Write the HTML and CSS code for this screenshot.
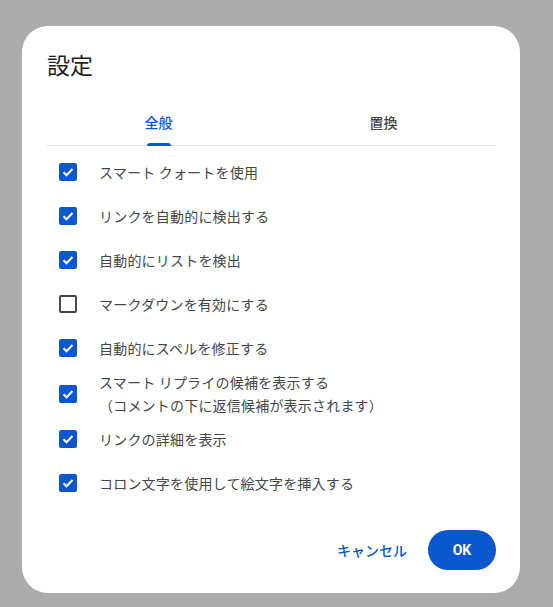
FILE: index.html
```html
<!DOCTYPE html>
<html lang="ja">
<head>
<meta charset="utf-8">
<link rel="stylesheet" href="styles.css">
</head>
<body>
<div class="dialog">
  <h1 class="title">設定</h1>
  <div class="tabs">
    <div class="tab active">全般<span class="indicator"></span></div>
    <div class="tab">置換</div>
  </div>
  <ul class="list">
    <li class="row"><span class="cb on"><svg viewBox="0 0 18 18"><path d="M4.5 9.2l3 3 6-6.2" fill="none" stroke="#fff" stroke-width="2"/></svg></span><span class="label">スマート クォートを使用</span></li>
    <li class="row"><span class="cb on"><svg viewBox="0 0 18 18"><path d="M4.5 9.2l3 3 6-6.2" fill="none" stroke="#fff" stroke-width="2"/></svg></span><span class="label">リンクを自動的に検出する</span></li>
    <li class="row"><span class="cb on"><svg viewBox="0 0 18 18"><path d="M4.5 9.2l3 3 6-6.2" fill="none" stroke="#fff" stroke-width="2"/></svg></span><span class="label">自動的にリストを検出</span></li>
    <li class="row"><span class="cb off"></span><span class="label">マークダウンを有効にする</span></li>
    <li class="row"><span class="cb on"><svg viewBox="0 0 18 18"><path d="M4.5 9.2l3 3 6-6.2" fill="none" stroke="#fff" stroke-width="2"/></svg></span><span class="label">自動的にスペルを修正する</span></li>
    <li class="row tall"><span class="cb on"><svg viewBox="0 0 18 18"><path d="M4.5 9.2l3 3 6-6.2" fill="none" stroke="#fff" stroke-width="2"/></svg></span><span class="label">スマート リプライの候補を表示する<br>（コメントの下に返信候補が表示されます）</span></li>
    <li class="row"><span class="cb on"><svg viewBox="0 0 18 18"><path d="M4.5 9.2l3 3 6-6.2" fill="none" stroke="#fff" stroke-width="2"/></svg></span><span class="label">リンクの詳細を表示</span></li>
    <li class="row"><span class="cb on"><svg viewBox="0 0 18 18"><path d="M4.5 9.2l3 3 6-6.2" fill="none" stroke="#fff" stroke-width="2"/></svg></span><span class="label">コロン文字を使用して絵文字を挿入する</span></li>
  </ul>
  <div class="actions">
    <button class="btn text">キャンセル</button>
    <button class="btn filled">OK</button>
  </div>
</div>
</body>
</html>
```
FILE: styles.css
```css
html, body {
  margin: 0;
  padding: 0;
  background: #ababab;
  height: 100%;
}
body {
  font-family: "Noto Sans CJK JP", "Noto Sans", sans-serif;
}
.dialog {
  box-sizing: border-box;
  margin: 26px 0 0 22px;
  width: 498px;
  height: 567px;
  background: #fff;
  border-radius: 26px;
  padding: 22px 24px 0 24px;
}
.title {
  margin: 0;
  font-size: 23px;
  line-height: 32px;
  font-weight: 400;
  color: #1f1f1f;
  padding-left: 1px;
}
.tabs {
  margin-top: 18px;
  display: flex;
  border-bottom: 1px solid #e1e3e1;
}
.tab {
  position: relative;
  flex: 1;
  height: 47px;
  display: flex;
  align-items: center;
  justify-content: center;
  font-size: 14px;
  font-weight: 500;
  color: #444746;
}
.tab.active {
  color: #0b57d0;
}
.indicator {
  position: absolute;
  bottom: -1px;
  left: 50%;
  width: 24px;
  margin-left: -12px;
  height: 3px;
  background: #0b57d0;
  border-radius: 3px 3px 0 0;
}
.list {
  list-style: none;
  margin: 4px 0 0 0;
  padding: 0 0 0 13px;
}
.row {
  display: flex;
  align-items: center;
  height: 44px;
}
.row.tall {
  height: 47px;
}
.cb {
  box-sizing: border-box;
  width: 18px;
  height: 18px;
  border-radius: 2px;
  flex: none;
  display: flex;
}
.cb.on {
  background: #0b57d0;
}
.cb.off {
  border: 2px solid #444746;
}
.cb svg {
  width: 18px;
  height: 18px;
}
.label {
  margin-left: 22px;
  font-size: 14px;
  line-height: 23px;
  letter-spacing: 0.2px;
  color: #444746;
}
.actions {
  margin-top: 25px;
  display: flex;
  justify-content: flex-end;
  align-items: center;
  gap: 8px;
}
.btn {
  height: 40px;
  border: none;
  border-radius: 20px;
  font-family: "Noto Sans CJK JP", "Noto Sans", sans-serif;
  font-size: 14px;
  font-weight: 500;
  cursor: pointer;
}
.btn.text {
  background: transparent;
  color: #0b57d0;
  padding: 0 13px;
}
.btn.filled {
  background: #0b57d0;
  color: #fff;
  width: 68px;
  padding: 0;
  font-family: Roboto, "Noto Sans", sans-serif;
  font-weight: 700;
}
```
